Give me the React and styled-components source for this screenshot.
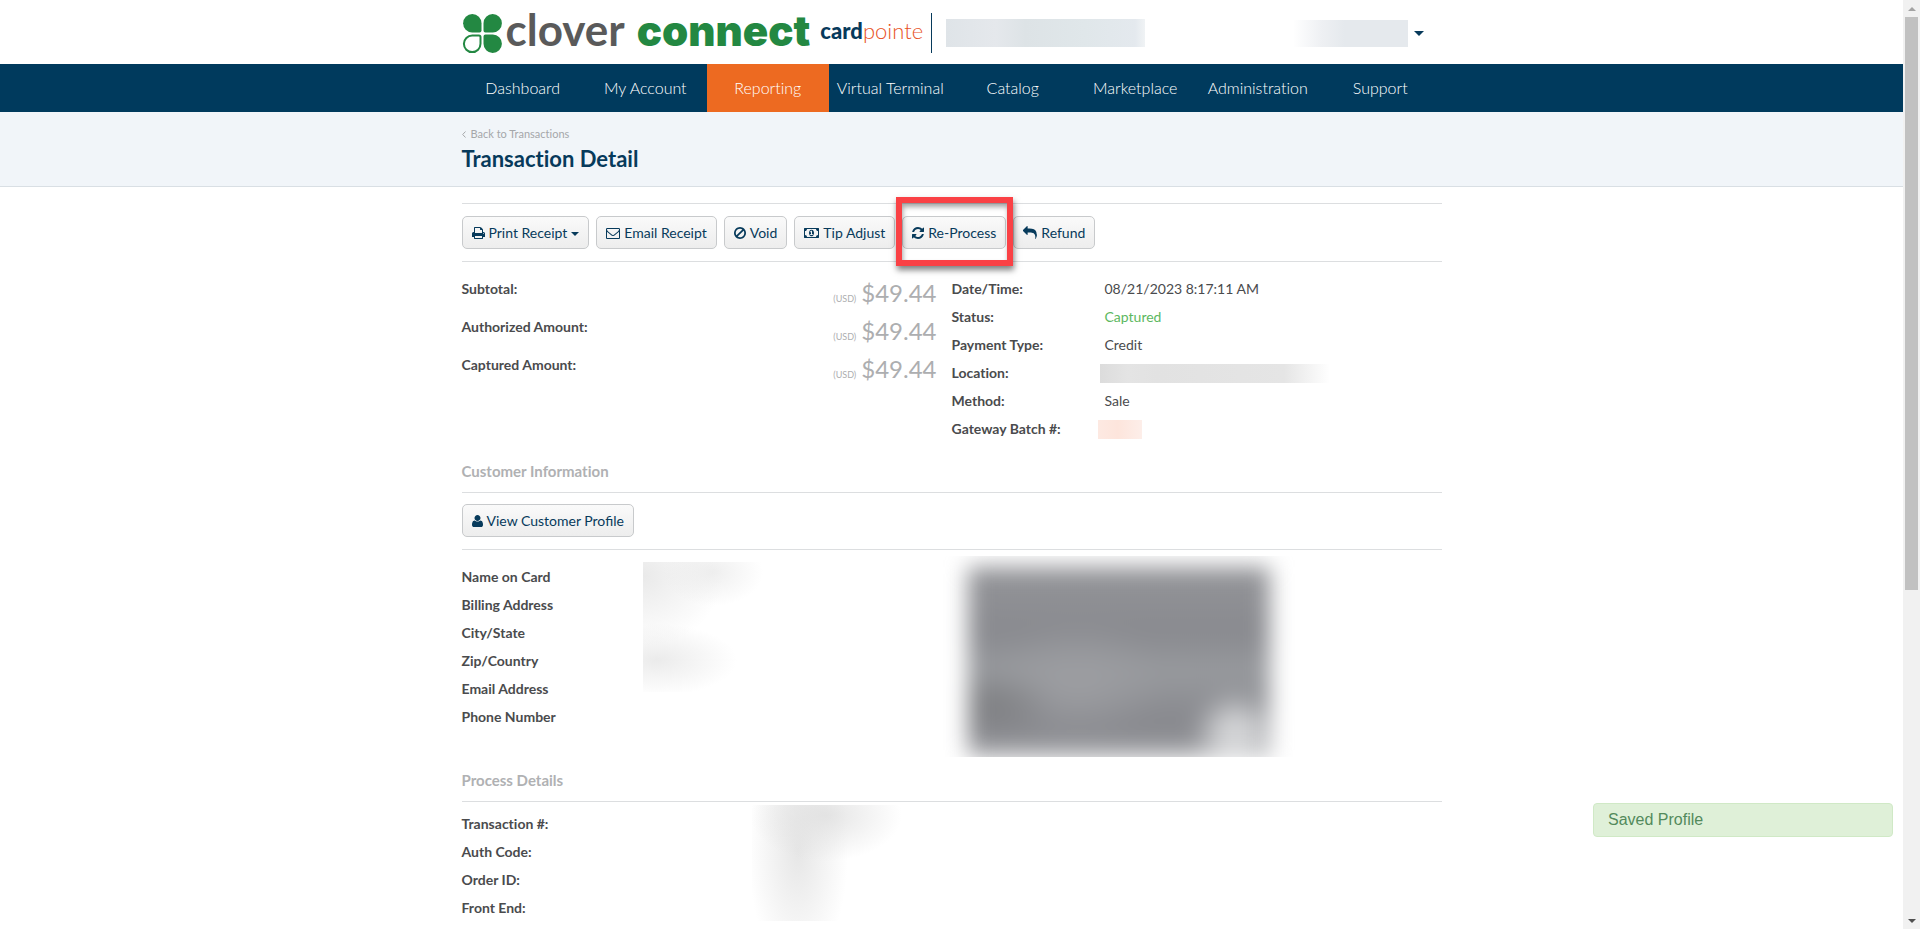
import React from 'react';
import styled, { createGlobalStyle } from 'styled-components';

const GlobalStyle = createGlobalStyle`
  * {
    box-sizing: border-box;
  }
  body {
    margin: 0;
    background-color: #fff;
    color: #4a4b4d;
    font-family: Lato, "Liberation Sans", sans-serif;
    font-size: 14px;
    font-variant-ligatures: none;
    line-height: 28px;
  }
`;

const Window = styled.div`
  display: flex;
  height: 100vh;
  overflow: hidden;
`;

const Page = styled.div`
  flex: 1;
  min-width: 0;
  overflow: hidden;
`;

const Container = styled.div`
  max-width: 980px;
  margin: 0 auto;
`;

const HeaderBar = styled(Container)`
  display: flex;
  align-items: center;
  height: 64px;
  padding-top: 2px;
`;

const Brand = styled.a`
  display: flex;
  align-items: center;
  text-decoration: none;
  white-space: nowrap;

  svg {
    width: 41px;
    height: 41px;
  }
`;

const BrandName = styled.span`
  display: flex;
  align-items: baseline;
  gap: 12px;
  margin: 0 0 6px 3px;
  font-size: 44px;
  font-weight: 700;
  line-height: 48px;
  color: #5a5a5a;

  b {
    font-family: Inter, Lato, sans-serif;
    font-size: 42px;
    color: #238842;
  }
`;

const ProductName = styled.span`
  margin: 0 0 4px 10px;
  font-size: 22px;
  font-weight: 300;
  line-height: 28px;
  color: #e8531f;

  b {
    font-weight: 900;
    color: #073a5b;
  }
`;

const Divider = styled.div`
  width: 1px;
  height: 40px;
  margin: 0 14px 0 8px;
  background-color: #073a5b;
`;

const MerchantName = styled.div`
  width: 199px;
  height: 28px;
  background: linear-gradient(90deg, #dfe4e8, #e5e8ec 25%, #dde3e6 40%, #e0e7ea 70%, #e4e9ee 95%, #f0f3f5);
`;

const AccountMenu = styled.button`
  display: flex;
  align-items: center;
  gap: 6px;
  margin-left: auto;
  margin-right: 18px;
  padding: 0;
  border: 0;
  background: none;
  cursor: pointer;
`;

const AccountName = styled.span`
  width: 115px;
  height: 27px;
  background: linear-gradient(90deg, #fff, #eef0f3 25%, #e5e9ed 45%, #e5e9ed);
`;

const Caret = styled.span`
  display: inline-block;
  border: solid transparent;
  border-width: 5px 5px 0;
  border-top-color: #073a5b;
`;

const NavBar = styled.nav`
  background-color: #003a5d;
`;

const NavItems = styled(Container)`
  display: flex;
`;

const NavItem = styled.a`
  flex: 1 1 0;
  height: 48px;
  line-height: 48px;
  font-size: 16px;
  font-weight: 300;
  text-align: center;
  text-decoration: none;
  white-space: nowrap;
  color: #fff;
  background-color: ${(props) => (props.$active ? '#ed6a21' : 'transparent')};
`;

const TitleBar = styled.div`
  height: 75px;
  padding-top: 14px;
  background-color: #f1f5f9;
  border-bottom: 1px solid #d9dfe4;
`;

const BackLink = styled.a`
  display: flex;
  align-items: center;
  gap: 5px;
  font-size: 11px;
  line-height: 16px;
  text-decoration: none;
  color: #a5a7aa;

  svg {
    width: 4px;
    height: 7px;
  }
`;

const Title = styled.h1`
  margin: 3px 0 0;
  font-size: 22px;
  font-weight: 700;
  line-height: 28px;
  color: #073a5b;
`;

const Toolbar = styled.div`
  display: flex;
  gap: 7px;
  margin-top: ${(props) => (props.$spaced ? '16px' : '0')};
  padding: ${(props) => (props.$spaced ? '12px 0' : '11px 0 12px')};
  border-top: 1px solid #dcdee0;
  border-bottom: 1px solid #dcdee0;
`;

const ActionButton = styled.button`
  position: relative;
  display: flex;
  align-items: center;
  gap: 4px;
  height: 33px;
  padding: 0 9px;
  border: 1px solid #c8cacc;
  border-radius: 5px;
  background: linear-gradient(#fafafa, #ededed);
  color: #073a5b;
  font-family: inherit;
  font-size: 14px;
  white-space: nowrap;
  cursor: pointer;

  svg {
    height: 14px;
    fill: currentColor;
  }
  ${Caret} {
    margin-top: 3px;
    border-width: 4px 4px 0;
  }
`;

const Highlight = styled.span`
  position: absolute;
  inset: -20px -8px -18px -7px;
  z-index: 1;
  border: 6px solid #fa4145;
  box-shadow: 1px 4px 6px rgba(0, 0, 0, 0.5), inset 1px 4px 5px rgba(0, 0, 0, 0.35);
  pointer-events: none;
`;

const Summary = styled.div`
  display: grid;
  grid-template-columns: 1fr 1fr;
  padding: 13px 0 5px;
`;

const Amounts = styled.dl`
  margin: 0;
  padding-right: 15px;
`;

const AmountRow = styled.div`
  display: flex;
  justify-content: space-between;
  height: 38px;

  dt {
    font-weight: 700;
  }
  dd {
    margin: 0;
    padding-top: 4px;
    font-size: 24px;
    color: #adaeb0;
  }
  small {
    margin-right: 5px;
    font-size: 9px;
  }
`;

const Fields = styled.dl`
  margin: 0;
  padding-top: ${(props) => props.$top || '0'};
`;

const Field = styled.div`
  display: flex;
  align-items: center;
  height: 28px;

  dt {
    width: 153px;
    font-weight: 700;
  }
  dd {
    margin: 0;
    color: ${(props) => (props.$captured ? '#5cb860' : 'inherit')};
  }
`;

const LocationMask = styled.span`
  display: block;
  width: 230px;
  height: 19px;
  margin-left: -5px;
  background: linear-gradient(90deg, #dcdcdc, #e4e4e4 12%, #e2e2e2 25%, #e5e5e5 80%, #fff);
`;

const BatchMask = styled.span`
  display: block;
  width: 44px;
  height: 19px;
  margin-left: -7px;
  background: linear-gradient(90deg, #fde9e2, #fde5dc 45%, #fdeee9);
`;

const SectionTitle = styled.h2`
  height: 35px;
  margin: 9px 0 0;
  font-size: 15px;
  font-weight: 700;
  line-height: 28px;
  color: #b0b1b3;
`;

const CustomerDetails = styled.div`
  display: grid;
  grid-template-columns: 181px 300px 1fr;
  align-items: start;
`;

const CustomerMask = styled.div`
  width: 122px;
  height: 130px;
  margin-top: 12px;
  background:
    radial-gradient(50px 34px at 70px 10px, rgba(228, 228, 228, 0.6), transparent),
    radial-gradient(80px 70px at 0 14px, rgba(228, 228, 228, 0.8), transparent),
    radial-gradient(80px 36px at 14px 98px, rgba(230, 230, 230, 0.8), transparent);
`;

const CardMask = styled.div`
  display: flex;
  align-items: flex-end;
  justify-content: center;
  width: 352px;
  height: 201px;
  margin-top: 6px;
  overflow: hidden;
`;

const CardArt = styled.div`
  flex: none;
  width: 302px;
  height: 190px;
  background:
    radial-gradient(44px 44px at 268px 168px, #d4d5d7 35%, transparent),
    radial-gradient(64px 34px at 22px 138px, #7f8083, transparent),
    radial-gradient(90px 60px at 110px 114px, #9d9ea2, transparent),
    linear-gradient(#939498, #898a8f 35%, #989a9e 55%, #898a8f 78%, #898a8f 90%, #b4b5b8);
  filter: blur(11px);
`;

const ProcessDetails = styled.div`
  display: grid;
  grid-template-columns: 290px 1fr;
  border-top: 1px solid #dcdee0;
`;

const ProcessMask = styled.div`
  width: 150px;
  height: 116px;
  margin-top: 3px;
  background:
    radial-gradient(76px 46px at 74px 10px, rgba(222, 222, 222, 0.8), transparent),
    radial-gradient(50px 120px at 46px 46px, rgba(224, 224, 224, 0.8), transparent);
`;

const Toast = styled.div`
  position: fixed;
  right: 27px;
  bottom: 92px;
  width: 300px;
  height: 34px;
  padding-left: 14px;
  border: 1px solid #d0e9c6;
  border-radius: 4px;
  background-color: #dff0d8;
  color: #538a5c;
  font-family: "Liberation Sans", Arial, sans-serif;
  font-size: 16px;
  line-height: 32px;
`;

const ScrollBar = styled.div`
  display: flex;
  flex-direction: column;
  align-items: center;
  width: 17px;
  background-color: #f1f1f1;
`;

const ScrollArrow = styled.span`
  display: flex;
  align-items: center;
  justify-content: center;
  height: 17px;

  &::before {
    content: '';
    border: solid transparent;
    border-width: ${(props) => (props.$up ? '0 4px 4px' : '4px 4px 0')};
    border-top-color: #505050;
    border-bottom-color: #a3a3a3;
  }
`;

const ScrollTrack = styled.div`
  flex: 1;
`;

const ScrollThumb = styled.div`
  width: 13px;
  height: 64%;
  background-color: #c1c1c1;
`;

const ICONS = {
  print:
    'M448 1536h896v-256h-896v256zm0-640h896v-384h-160q-40 0-68-28t-28-68v-160h-640v640zm1152 64q0-26-19-45t-45-19-45 19-19 45 19 45 45 19 45-19 19-45zm128 0v416q0 13-9.5 22.5t-22.5 9.5h-224v160q0 40-28 68t-68 28h-960q-40 0-68-28t-28-68v-160h-224q-13 0-22.5-9.5t-9.5-22.5v-416q0-79 56.5-135.5t135.5-56.5h64v-544q0-40 28-68t68-28h672q40 0 88 20t76 48l152 152q28 28 48 76t20 88v256h64q79 0 135.5 56.5t56.5 135.5z',
  envelope:
    'M1664 1504v-768q-32 36-69 66-268 206-426 338-51 43-83 67t-86.5 48.5-102.5 24.5h-2q-48 0-102.5-24.5t-86.5-48.5-83-67q-158-132-426-338-37-30-69-66v768q0 13 9.5 22.5t22.5 9.5h1472q13 0 22.5-9.5t9.5-22.5zm0-1051v-24.5l-.5-13-3-12.5-5.5-9-9-7.5-14-2.5h-1472q-13 0-22.5 9.5t-9.5 22.5q0 168 147 284 193 152 401 317 6 5 35 29.5t46 37.5 44.5 31.5 50.5 27.5 43 9h2q20 0 43-9t50.5-27.5 44.5-31.5 46-37.5 35-29.5q208-165 401-317 54-43 100.5-115.5t46.5-131.5zm128-37v1088q0 66-47 113t-113 47h-1472q-66 0-113-47t-47-113v-1088q0-66 47-113t113-47h1472q66 0 113 47t47 113z',
  ban: 'M1440 893q0-161-87-295l-754 753q137 89 297 89 111 0 211.5-43.5t173.5-116.5 116-174.5 43-212.5zm-999 299l755-754q-135-91-300-91-148 0-273 73t-198 199-73 274q0 162 89 299zm1223-299q0 157-61 300t-163.5 246-245 164-298.5 61-298.5-61-245-164-163.5-246-61-300 61-299.5 163.5-245.5 245-164 298.5-61 298.5 61 245 164 163.5 245.5 61 299.5z',
  money:
    'M768 1152h384v-96h-128v-448h-114l-148 137 77 80q42-37 55-57h2v288h-128v96zm512-256q0 70-21 142t-59.5 134-101.5 101-138 39-138-39-101.5-101-59.5-134-21-142 21-142 59.5-134 101.5-101 138-39 138 39 101.5 101 59.5 134 21 142zm512 256v-512q-106 0-181-75t-75-181h-1152q0 106-75 181t-181 75v512q106 0 181 75t75 181h1152q0-106 75-181t181-75zm128-832v1152q0 26-19 45t-45 19h-1792q-26 0-45-19t-19-45v-1152q0-26 19-45t45-19h1792q26 0 45 19t19 45z',
  refresh:
    'M1639 1056q0 5-1 7-64 268-268 434.5t-478 166.5q-146 0-282.5-55t-243.5-157l-129 129q-19 19-45 19t-45-19-19-45v-448q0-26 19-45t45-19h448q26 0 45 19t19 45-19 45l-137 137q71 66 161 102t187 36q134 0 250-65t186-179q11-17 53-117 8-23 30-23h192q13 0 22.5 9.5t9.5 22.5zm25-800v448q0 26-19 45t-45 19h-448q-26 0-45-19t-19-45 19-45l138-138q-148-137-349-137-134 0-250 65t-186 179q-11 17-53 117-8 23-30 23h-199q-13 0-22.5-9.5t-9.5-22.5v-7q65-268 270-434.5t480-166.5q146 0 284 55.5t245 156.5l130-129q19-19 45-19t45 19 19 45z',
  reply:
    'M1792 1120q0 166-127 451-3 7-10.5 24t-13.5 30-13 22q-12 17-28 17-15 0-23.5-10t-8.5-25q0-9 2.5-26.5t2.5-23.5q5-68 5-123 0-112-19.5-200.5t-54-153.5-89-112-118-78.5-142-48.5-160.5-25.5-177-6.5h-224v256q0 26-19 45t-45 19-45-19l-512-512q-19-19-19-45t19-45l512-512q19-19 45-19t45 19 19 45v256h224q713 0 875 403 53 134 53 333z',
  user: 'M1600 1405q0 120-73 189.5t-194 69.5h-874q-121 0-194-69.5t-73-189.5q0-53 3.5-103.5t14-109 26.5-108.5 43-97.5 62-81 85.5-53.5 111.5-20q9 0 42 21.5t74.5 48 108 48 133.5 21.5 133.5-21.5 108-48 74.5-48 42-21.5q61 0 111.5 20t85.5 53.5 62 81 43 97.5 26.5 108.5 14 109 3.5 103.5zm-320-893q0 159-112.5 271.5t-271.5 112.5-271.5-112.5-112.5-271.5 112.5-271.5 271.5-112.5 271.5 112.5 112.5 271.5z',
};

// [left, width] of the drawing on the 1792 high icon grid
const ICON_BOX = {
  print: [64, 1664],
  envelope: [0, 1792],
  ban: [128, 1536],
  money: [0, 1920],
  refresh: [128, 1536],
  reply: [0, 1792],
  user: [192, 1408],
};

const Icon = ({ name }) => {
  const [left, width] = ICON_BOX[name];
  return (
    <svg viewBox={`${left} 0 ${width} 1792`} aria-hidden="true">
      <path d={ICONS[name]} />
    </svg>
  );
};

const CloverLogo = () => (
  <svg viewBox="0 0 41 41" aria-hidden="true" fill="#238842">
    <path d="M19.500 17.500V10.200A9.200 9.200 0 1 0 10.200 19.400H17.600Q19.500 19.400 19.500 17.500Z" />
    <path d="M21.500 17.500V10.200A9.200 9.200 0 1 1 30.800 19.400H23.400Q21.500 19.400 21.500 17.500Z" />
    <path d="M21.500 23.500V30.800A9.200 9.200 0 1 0 30.800 21.600H23.400Q21.500 21.600 21.500 23.500Z" />
    <path
      d="M18.500 24V30.800A8.300 8.300 0 1 1 10.200 22.500H17Q18.500 22.500 18.500 24Z"
      fill="#fff"
      stroke="#238842"
      strokeWidth="2"
    />
  </svg>
);

const navItems = [
  'Dashboard',
  'My Account',
  'Reporting',
  'Virtual Terminal',
  'Catalog',
  'Marketplace',
  'Administration',
  'Support',
];

const actions = [
  { icon: 'print', label: 'Print Receipt', menu: true },
  { icon: 'envelope', label: 'Email Receipt' },
  { icon: 'ban', label: 'Void' },
  { icon: 'money', label: 'Tip Adjust' },
  { icon: 'refresh', label: 'Re-Process', highlighted: true },
  { icon: 'reply', label: 'Refund' },
];

const amounts = ['Subtotal:', 'Authorized Amount:', 'Captured Amount:'];

const customerFields = [
  'Name on Card',
  'Billing Address',
  'City/State',
  'Zip/Country',
  'Email Address',
  'Phone Number',
];

const processFields = ['Transaction #:', 'Auth Code:', 'Order ID:', 'Front End:'];

const App = () => {
  return (
    <Window>
      <GlobalStyle />
      <Page>
        <header>
          <HeaderBar>
            <Brand href="#">
              <CloverLogo />
              <BrandName>
                clover <b>connect</b>
              </BrandName>
              <ProductName>
                <b>card</b>pointe
              </ProductName>
            </Brand>
            <Divider />
            <MerchantName />
            <AccountMenu aria-label="Account">
              <AccountName />
              <Caret />
            </AccountMenu>
          </HeaderBar>
          <NavBar>
            <NavItems>
              {navItems.map((item) => (
                <NavItem key={item} href="#" $active={item === 'Reporting'}>
                  {item}
                </NavItem>
              ))}
            </NavItems>
          </NavBar>
        </header>
        <TitleBar>
          <Container>
            <BackLink href="#">
              <svg viewBox="0 0 4 7" fill="none" stroke="currentColor" aria-hidden="true">
                <path d="M3.500 0.500L0.700 3.500L3.500 6.500" />
              </svg>
              Back to Transactions
            </BackLink>
            <Title>Transaction Detail</Title>
          </Container>
        </TitleBar>
        <Container as="main">
          <Toolbar $spaced>
            {actions.map((action) => (
              <ActionButton key={action.label}>
                <Icon name={action.icon} />
                {action.label}
                {action.menu && <Caret />}
                {action.highlighted && <Highlight />}
              </ActionButton>
            ))}
          </Toolbar>
          <Summary>
            <Amounts>
              {amounts.map((label) => (
                <AmountRow key={label}>
                  <dt>{label}</dt>
                  <dd>
                    <small>(USD)</small>$49.44
                  </dd>
                </AmountRow>
              ))}
            </Amounts>
            <Fields>
              <Field>
                <dt>Date/Time:</dt>
                <dd>08/21/2023 8:17:11 AM</dd>
              </Field>
              <Field $captured>
                <dt>Status:</dt>
                <dd>Captured</dd>
              </Field>
              <Field>
                <dt>Payment Type:</dt>
                <dd>Credit</dd>
              </Field>
              <Field>
                <dt>Location:</dt>
                <dd>
                  <LocationMask />
                </dd>
              </Field>
              <Field>
                <dt>Method:</dt>
                <dd>Sale</dd>
              </Field>
              <Field>
                <dt>Gateway Batch #:</dt>
                <dd>
                  <BatchMask />
                </dd>
              </Field>
            </Fields>
          </Summary>
          <SectionTitle>Customer Information</SectionTitle>
          <Toolbar>
            <ActionButton>
              <Icon name="user" />
              View Customer Profile
            </ActionButton>
          </Toolbar>
          <CustomerDetails>
            <Fields $top="13px">
              {customerFields.map((label) => (
                <Field key={label}>
                  <dt>{label}</dt>
                </Field>
              ))}
            </Fields>
            <CustomerMask />
            <CardMask>
              <CardArt />
            </CardMask>
          </CustomerDetails>
          <SectionTitle>Process Details</SectionTitle>
          <ProcessDetails>
            <Fields $top="8px">
              {processFields.map((label) => (
                <Field key={label}>
                  <dt>{label}</dt>
                </Field>
              ))}
            </Fields>
            <ProcessMask />
          </ProcessDetails>
        </Container>
      </Page>
      <ScrollBar>
        <ScrollArrow $up />
        <ScrollTrack>
          <ScrollThumb />
        </ScrollTrack>
        <ScrollArrow />
      </ScrollBar>
      <Toast role="status">Saved Profile</Toast>
    </Window>
  );
};

export default App;
